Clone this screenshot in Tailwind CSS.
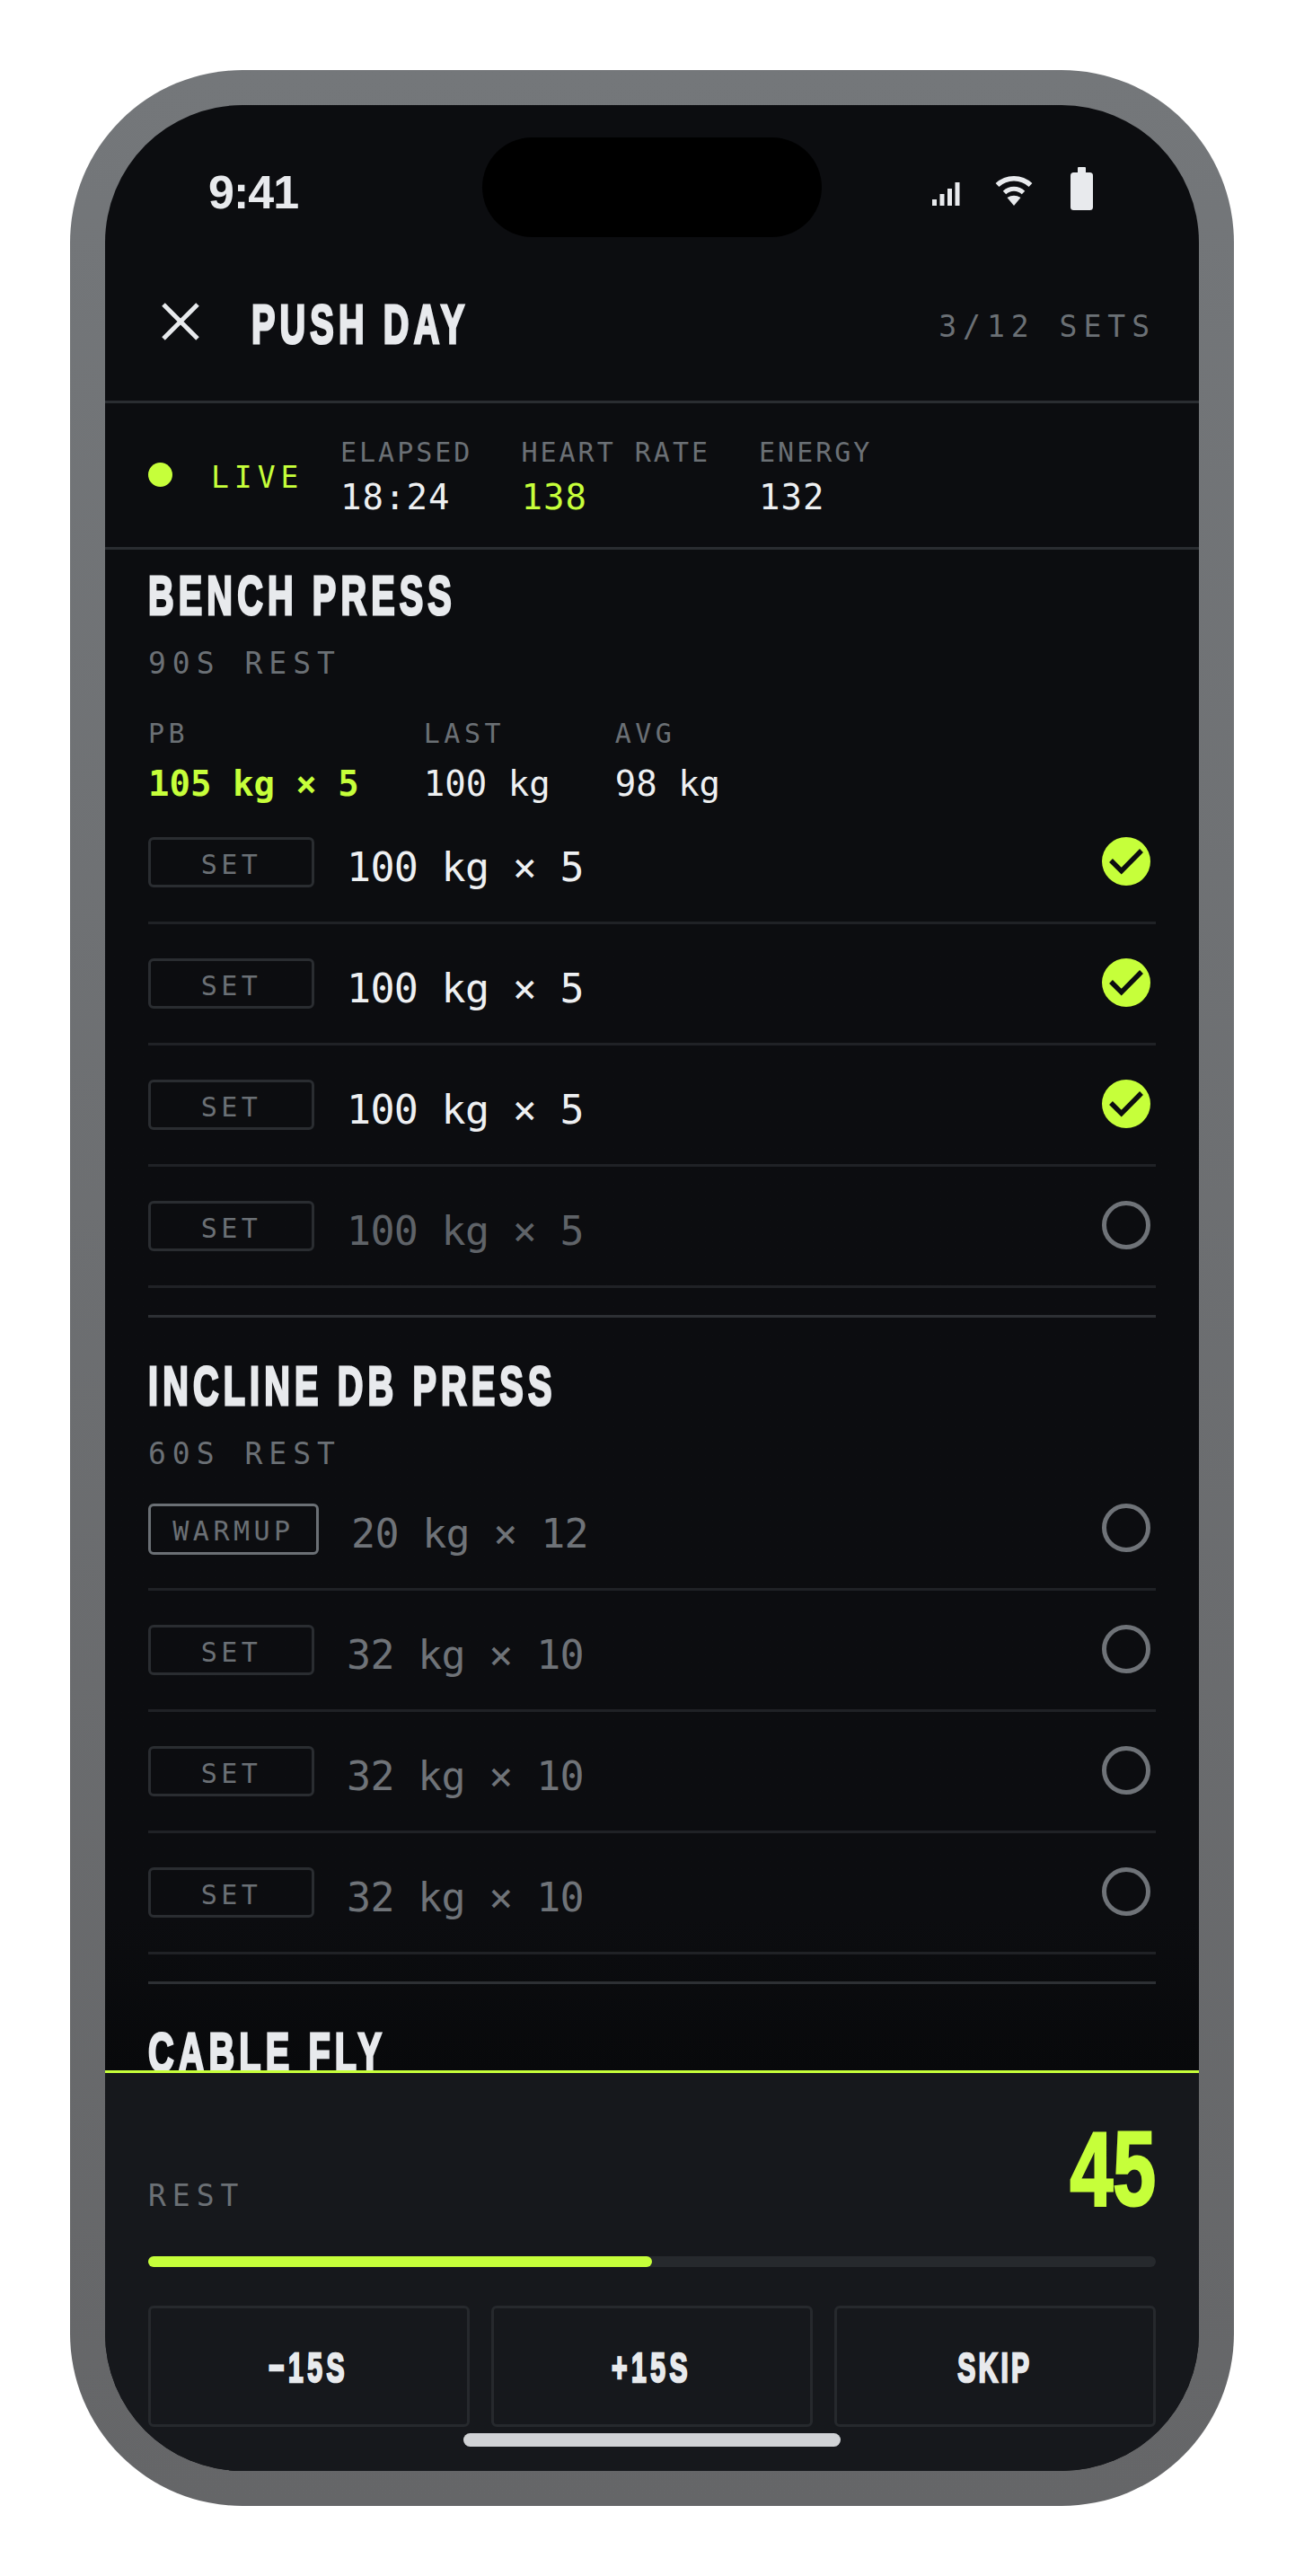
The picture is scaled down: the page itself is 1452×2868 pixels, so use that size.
<!doctype html>
<html lang="en">
<head>
  <meta charset="UTF-8" />
  <meta name="viewport" content="width=device-width, initial-scale=1.0" />
  <title>Push Day</title>
  <script src="https://cdn.jsdelivr.net/npm/@tailwindcss/browser@4"></script>
</head>
<body class="bg-white w-[1452px] h-[2868px] p-[78px] overflow-hidden font-['DejaVu_Sans_Mono',monospace]">
  <div class="w-[1296px] h-[2712px] rounded-[192px] p-[39px] bg-linear-to-b from-[#74777a] to-[#656668]">
    <div class="relative w-[1218px] h-[2634px] rounded-[153px] overflow-hidden bg-[#0c0d10] flex flex-col">

      <!-- status bar -->
      <div class="relative h-[180px] shrink-0">
        <span class="absolute left-[115px] top-[67px] text-[52px] leading-[60px] font-bold tracking-[-1px] text-[#e8eaed] font-['Liberation_Sans',sans-serif]">9:41</span>
        <div class="absolute left-[420px] top-[36px] w-[378px] h-[111px] rounded-[56px] bg-black"></div>
        <svg class="absolute left-[921px] top-[86px]" width="31" height="26" viewBox="0 0 31 26" fill="#e8eaed">
          <rect x="0" y="19" width="5" height="7" /><rect x="8.5" y="13" width="5" height="13" /><rect x="17" y="7" width="5" height="19" /><rect x="25.5" y="0" width="5" height="26" />
        </svg>
        <svg class="absolute left-[991px] top-[78px]" width="42" height="34" viewBox="0 0 42 34" fill="none" stroke="#e8eaed">
          <path d="M2.5 11 A27 27 0 0 1 39.5 11" stroke-width="5.5" />
          <path d="M10.5 19.5 A15 15 0 0 1 31.5 19.5" stroke-width="5" />
          <path d="M13.5 25 Q21 20.5 28.5 25 L21 34 Z" fill="#e8eaed" stroke="none" />
        </svg>
        <svg class="absolute left-[1075px] top-[69px]" width="25" height="48" viewBox="0 0 25 48" fill="#e8eaed">
          <rect x="8" y="0" width="9" height="8" rx="1" /><rect x="0" y="6" width="25" height="42" rx="3.5" />
        </svg>
      </div>

      <!-- header -->
      <div class="h-[152px] shrink-0 border-b-[3px] border-[#2a2d31] flex items-center pl-[63px] pr-[48px] pb-[28px]">
        <svg width="42" height="42" viewBox="0 0 42 42" stroke="#e8eaed" stroke-width="5" fill="none"><path d="M2 2 L40 40 M40 2 L2 40" /></svg>
        <h1 class="ml-[58px] mt-[6px] w-[300px] text-[62px] leading-[67px] font-bold tracking-[8px] text-[#e8eaed] origin-left scale-x-[.64] whitespace-nowrap font-['Liberation_Sans',sans-serif] [-webkit-text-stroke:3px_#e8eaed]">PUSH DAY</h1>
        <span class="ml-auto mt-[12px] text-[33px] leading-[40px] tracking-[7px] text-[#6b7075] whitespace-nowrap">3/12 SETS</span>
      </div>

      <!-- live stats -->
      <div class="h-[163px] shrink-0 border-b-[3px] border-[#2a2d31] flex items-center pl-[48px] text-[39px] leading-[45px] text-[#eef0f2]">
        <span class="w-[27px] h-[27px] rounded-full bg-[#c6ff3a] -mt-[2px]"></span>
        <span class="ml-[43px] w-[144px] mt-[5px] text-[33px] leading-[40px] tracking-[6px] text-[#c6ff3a]">LIVE</span>
        <div class="flex gap-[54px] pt-[4px]">
          <div>
            <div class="text-[30px] leading-[34px] tracking-[3px] text-[#6b7075]">ELAPSED</div>
            <div class="mt-[10px] tracking-[1px]">18:24</div>
          </div>
          <div>
            <div class="text-[30px] leading-[34px] tracking-[3px] text-[#6b7075]">HEART RATE</div>
            <div class="mt-[10px] tracking-[1px] text-[#c6ff3a]">138</div>
          </div>
          <div>
            <div class="text-[30px] leading-[34px] tracking-[3px] text-[#6b7075]">ENERGY</div>
            <div class="mt-[10px] tracking-[1px]">132</div>
          </div>
        </div>
      </div>

      <!-- exercises -->
      <div class="flex-1 min-h-0 overflow-hidden px-[48px] bg-linear-to-b from-[#0c0d10] from-[90%] to-[#08090b]">
        <section class="pt-[17px] pb-[30px] border-b-[3px] border-[#2d3034]">
          <h2 class="h-[67px] text-[62px] leading-[67px] font-bold tracking-[8px] text-[#e8eaed] origin-left scale-x-[.64] whitespace-nowrap font-['Liberation_Sans',sans-serif] [-webkit-text-stroke:3px_#e8eaed]">BENCH PRESS</h2>
          <p class="mt-[26px] text-[33px] leading-[33px] tracking-[7px] text-[#6b7075]">90S REST</p>
          <div class="mt-[47px] flex gap-[72px]">
            <div>
              <div class="text-[30px] leading-[30px] tracking-[4.5px] text-[#6b7075]">PB</div>
              <div class="mt-[21px] text-[39px] leading-[39px] font-bold text-[#c6ff3a]">105 kg × 5</div>
            </div>
            <div>
              <div class="text-[30px] leading-[30px] tracking-[4.5px] text-[#6b7075]">LAST</div>
              <div class="mt-[21px] text-[39px] leading-[39px] text-[#eef0f2]">100 kg</div>
            </div>
            <div>
              <div class="text-[30px] leading-[30px] tracking-[4.5px] text-[#6b7075]">AVG</div>
              <div class="mt-[21px] text-[39px] leading-[39px] text-[#eef0f2]">98 kg</div>
            </div>
          </div>

          <div class="mt-[2px] h-[135px] pt-[38px] border-b-[3px] border-[#202226] flex items-start">
            <span class="w-[185px] h-[56px] pt-[4px] rounded-[6px] border-[3px] border-[#2a2d31] flex items-center justify-center text-[30px] tracking-[4.5px] text-[#6b7075]">SET</span>
            <span class="ml-[36px] mt-[11px] text-[45px] leading-[45px] tracking-[-0.7px] text-[#eef0f2]">100 kg × 5</span>
            <svg class="ml-auto mr-[6px]" width="54" height="54" viewBox="0 0 54 54"><circle cx="27" cy="27" r="27" fill="#c6ff3a" /><path d="M10 26 L21.7 37.7 L44 15" fill="none" stroke="#0c0d10" stroke-width="5.5" /></svg>
          </div>
          <div class="h-[135px] pt-[38px] border-b-[3px] border-[#202226] flex items-start">
            <span class="w-[185px] h-[56px] pt-[4px] rounded-[6px] border-[3px] border-[#2a2d31] flex items-center justify-center text-[30px] tracking-[4.5px] text-[#6b7075]">SET</span>
            <span class="ml-[36px] mt-[11px] text-[45px] leading-[45px] tracking-[-0.7px] text-[#eef0f2]">100 kg × 5</span>
            <svg class="ml-auto mr-[6px]" width="54" height="54" viewBox="0 0 54 54"><circle cx="27" cy="27" r="27" fill="#c6ff3a" /><path d="M10 26 L21.7 37.7 L44 15" fill="none" stroke="#0c0d10" stroke-width="5.5" /></svg>
          </div>
          <div class="h-[135px] pt-[38px] border-b-[3px] border-[#202226] flex items-start">
            <span class="w-[185px] h-[56px] pt-[4px] rounded-[6px] border-[3px] border-[#2a2d31] flex items-center justify-center text-[30px] tracking-[4.5px] text-[#6b7075]">SET</span>
            <span class="ml-[36px] mt-[11px] text-[45px] leading-[45px] tracking-[-0.7px] text-[#eef0f2]">100 kg × 5</span>
            <svg class="ml-auto mr-[6px]" width="54" height="54" viewBox="0 0 54 54"><circle cx="27" cy="27" r="27" fill="#c6ff3a" /><path d="M10 26 L21.7 37.7 L44 15" fill="none" stroke="#0c0d10" stroke-width="5.5" /></svg>
          </div>
          <div class="h-[135px] pt-[38px] border-b-[3px] border-[#202226] flex items-start">
            <span class="w-[185px] h-[56px] pt-[4px] rounded-[6px] border-[3px] border-[#2a2d31] flex items-center justify-center text-[30px] tracking-[4.5px] text-[#6b7075]">SET</span>
            <span class="ml-[36px] mt-[11px] text-[45px] leading-[45px] tracking-[-0.7px] text-[#5f6368]">100 kg × 5</span>
            <svg class="ml-auto mr-[6px]" width="54" height="54" viewBox="0 0 54 54"><circle cx="27" cy="27" r="24.5" fill="none" stroke="#6f7378" stroke-width="5" /></svg>
          </div>
        </section>

        <section class="pt-[42px] pb-[30px] border-b-[3px] border-[#2d3034]">
          <h2 class="h-[67px] text-[62px] leading-[67px] font-bold tracking-[8px] text-[#e8eaed] origin-left scale-x-[.64] whitespace-nowrap font-['Liberation_Sans',sans-serif] [-webkit-text-stroke:3px_#e8eaed]">INCLINE DB PRESS</h2>
          <p class="mt-[26px] text-[33px] leading-[33px] tracking-[7px] text-[#6b7075]">60S REST</p>

          <div class="mt-[1px] h-[135px] pt-[38px] border-b-[3px] border-[#202226] flex items-start">
            <span class="w-[190px] h-[57px] pt-[4px] rounded-[6px] border-[3px] border-[#6b7075] flex items-center justify-center text-[30px] tracking-[4.5px] text-[#6b7075]">WARMUP</span>
            <span class="ml-[36px] mt-[11px] text-[45px] leading-[45px] tracking-[-0.7px] text-[#6f7378]">20 kg × 12</span>
            <svg class="ml-auto mr-[6px]" width="54" height="54" viewBox="0 0 54 54"><circle cx="27" cy="27" r="24.5" fill="none" stroke="#6f7378" stroke-width="5" /></svg>
          </div>
          <div class="h-[135px] pt-[38px] border-b-[3px] border-[#202226] flex items-start">
            <span class="w-[185px] h-[56px] pt-[4px] rounded-[6px] border-[3px] border-[#2a2d31] flex items-center justify-center text-[30px] tracking-[4.5px] text-[#6b7075]">SET</span>
            <span class="ml-[36px] mt-[11px] text-[45px] leading-[45px] tracking-[-0.7px] text-[#6f7378]">32 kg × 10</span>
            <svg class="ml-auto mr-[6px]" width="54" height="54" viewBox="0 0 54 54"><circle cx="27" cy="27" r="24.5" fill="none" stroke="#6f7378" stroke-width="5" /></svg>
          </div>
          <div class="h-[135px] pt-[38px] border-b-[3px] border-[#202226] flex items-start">
            <span class="w-[185px] h-[56px] pt-[4px] rounded-[6px] border-[3px] border-[#2a2d31] flex items-center justify-center text-[30px] tracking-[4.5px] text-[#6b7075]">SET</span>
            <span class="ml-[36px] mt-[11px] text-[45px] leading-[45px] tracking-[-0.7px] text-[#6f7378]">32 kg × 10</span>
            <svg class="ml-auto mr-[6px]" width="54" height="54" viewBox="0 0 54 54"><circle cx="27" cy="27" r="24.5" fill="none" stroke="#6f7378" stroke-width="5" /></svg>
          </div>
          <div class="h-[135px] pt-[38px] border-b-[3px] border-[#202226] flex items-start">
            <span class="w-[185px] h-[56px] pt-[4px] rounded-[6px] border-[3px] border-[#2a2d31] flex items-center justify-center text-[30px] tracking-[4.5px] text-[#6b7075]">SET</span>
            <span class="ml-[36px] mt-[11px] text-[45px] leading-[45px] tracking-[-0.7px] text-[#6f7378]">32 kg × 10</span>
            <svg class="ml-auto mr-[6px]" width="54" height="54" viewBox="0 0 54 54"><circle cx="27" cy="27" r="24.5" fill="none" stroke="#6f7378" stroke-width="5" /></svg>
          </div>
        </section>

        <section class="pt-[42px]">
          <h2 class="h-[67px] text-[62px] leading-[67px] font-bold tracking-[8px] text-[#e8eaed] origin-left scale-x-[.64] whitespace-nowrap font-['Liberation_Sans',sans-serif] [-webkit-text-stroke:3px_#e8eaed]">CABLE FLY</h2>
        </section>
      </div>

      <!-- rest timer -->
      <div class="h-[446px] shrink-0 border-t-[3px] border-[#c6ff3a] bg-[#16181c] px-[48px] pt-[47px]">
        <div class="flex items-end justify-between">
          <span class="mb-[14px] text-[33px] leading-[33px] tracking-[7px] text-[#6b7075]">REST</span>
          <span class="text-[116px] leading-[120px] font-bold text-[#c6ff3a] origin-right scale-x-[.74] font-['Liberation_Sans',sans-serif] [-webkit-text-stroke:3px_#c6ff3a]">45</span>
        </div>
        <div class="mt-[37px] h-[12px] rounded-full bg-[#26292d]">
          <div class="w-1/2 h-full rounded-full bg-[#c6ff3a]"></div>
        </div>
        <div class="mt-[43px] grid grid-cols-3 gap-[24px]">
          <button class="h-[135px] rounded-[6px] border-[3px] border-[#26292d] text-[#e8eaed]"><span class="inline-block mt-[2px] scale-x-[.64] text-[47px] leading-[50px] font-bold tracking-[7px] font-['Liberation_Sans',sans-serif] [-webkit-text-stroke:2.5px_#e8eaed]">−15S</span></button>
          <button class="h-[135px] rounded-[6px] border-[3px] border-[#26292d] text-[#e8eaed]"><span class="inline-block mt-[2px] scale-x-[.64] text-[47px] leading-[50px] font-bold tracking-[7px] font-['Liberation_Sans',sans-serif] [-webkit-text-stroke:2.5px_#e8eaed]">+15S</span></button>
          <button class="h-[135px] rounded-[6px] border-[3px] border-[#26292d] text-[#e8eaed]"><span class="inline-block mt-[2px] scale-x-[.64] text-[47px] leading-[50px] font-bold tracking-[5px] font-['Liberation_Sans',sans-serif] [-webkit-text-stroke:2.5px_#e8eaed]">SKIP</span></button>
        </div>
      </div>

      <div class="absolute left-[399px] top-[2592px] w-[420px] h-[15px] rounded-full bg-[#d1d3d6]"></div>
    </div>
  </div>
</body>
</html>
